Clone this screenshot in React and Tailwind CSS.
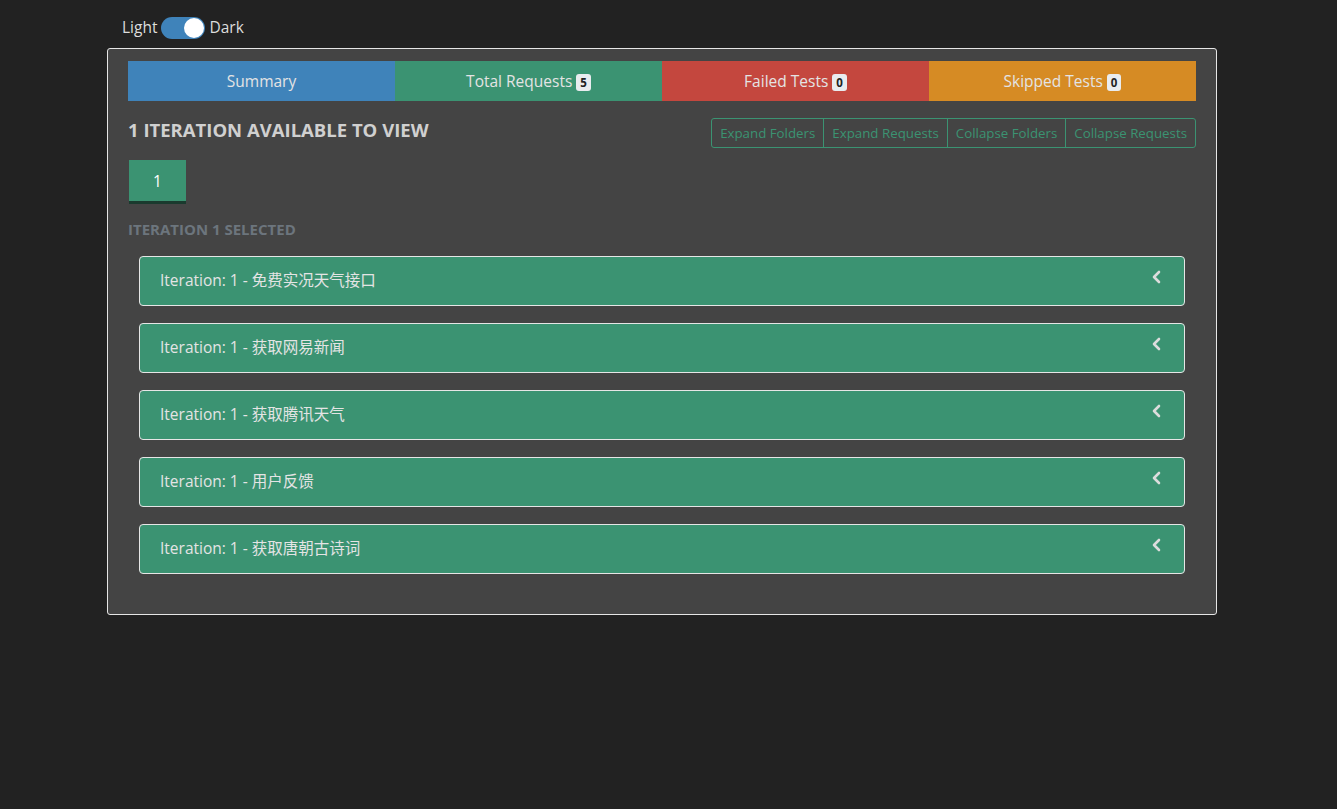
import React from "react";

const font = { fontFamily: "'Open Sans', 'Noto Sans CJK SC', sans-serif" };

const tabs = [
  { label: "Summary", bg: "bg-[#3f83ba]" },
  { label: "Total Requests", count: 5, bg: "bg-[#3b9372]" },
  { label: "Failed Tests", count: 0, bg: "bg-[#c4473e]" },
  { label: "Skipped Tests", count: 0, bg: "bg-[#d68b24]" },
];

const requests = ["免费实况天气接口", "获取网易新闻", "获取腾讯天气", "用户反馈", "获取唐朝古诗词"];

const actions = ["Expand Folders", "Expand Requests", "Collapse Folders", "Collapse Requests"];

export default function App() {
  return (
    <div className="min-h-[809px] bg-[#222222] pt-[15px] text-[#dddddd]" style={font}>
      {/* Theme toggle */}
      <div className="flex items-center gap-[4px] pl-[122px] text-[15.5px] h-[26px]">
        <span>Light</span>
        <div className="relative w-[44px] h-[22px] rounded-full bg-[#3f83ba]">
          <div className="absolute right-[1px] top-[1px] w-[20px] h-[20px] rounded-full bg-white" />
        </div>
        <span>Dark</span>
      </div>

      {/* Main card */}
      <div className="ml-[107px] mt-[7px] w-[1110px] bg-[#444444] border border-[#e6e6e6] rounded-[3px] px-[20px] pt-[12px] pb-[40px]">
        <div className="grid grid-cols-4 h-[40px]">
          {tabs.map((t) => (
            <div key={t.label} className={`${t.bg} flex items-center justify-center gap-[4px] pt-[2px] text-[15.5px] text-[#e4e4e4]`}>
              <span>{t.label}</span>
              {t.count !== undefined && (
                <span className="bg-[#e9ecef] text-[#222] text-[11.5px] font-bold rounded-[3px] px-[4px] leading-[17px]">
                  {t.count}
                </span>
              )}
            </div>
          ))}
        </div>

        <div className="flex items-start justify-between mt-[17px]">
          <h2 className="text-[18.5px] font-bold text-[#d0d0d0] leading-[25px] -mt-[1px]">1 ITERATION AVAILABLE TO VIEW</h2>
          <div className="flex border border-[#3b9372] rounded-[3px] h-[30px]">
            {actions.map((a, i) => (
              <div
                key={a}
                className={`px-[8px] pt-[1px] flex items-center text-[13.3px] text-[#3b9372] ${i > 0 ? "border-l border-[#3b9372]" : ""}`}
              >
                {a}
              </div>
            ))}
          </div>
        </div>

        <div className="mt-[12px] pl-[1px]">
          <div className="w-[57px] h-[44px] bg-[#3b9372] border-b-[3px] border-[#1a3a2e] pt-[3px] flex items-center justify-center text-[15.5px] text-white">
            1
          </div>
        </div>

        <div className="mt-[15px] text-[15px] font-bold text-[#6c757d] leading-[20px]">ITERATION 1 SELECTED</div>

        <div className="mt-[17px] px-[11px] flex flex-col gap-[17px]">
          {requests.map((r) => (
            <div
              key={r}
              className="relative h-[50px] bg-[#3b9372] border border-[#e6e6e6] rounded-[4px] flex items-center pl-[20px] text-[15.5px] text-[#e4e4e4]"
            >
              <span>Iteration: 1 - {r}</span>
              <svg
                className="absolute right-[22px] top-[13px]"
                width="11"
                height="14"
                viewBox="0 0 11 14"
                fill="none"
                stroke="#dcdcdc"
                strokeWidth="2.6"
                strokeLinecap="round"
                strokeLinejoin="round"
              >
                <polyline points="8,2 3,7 8,12" />
              </svg>
            </div>
          ))}
        </div>
      </div>
    </div>
  );
}
